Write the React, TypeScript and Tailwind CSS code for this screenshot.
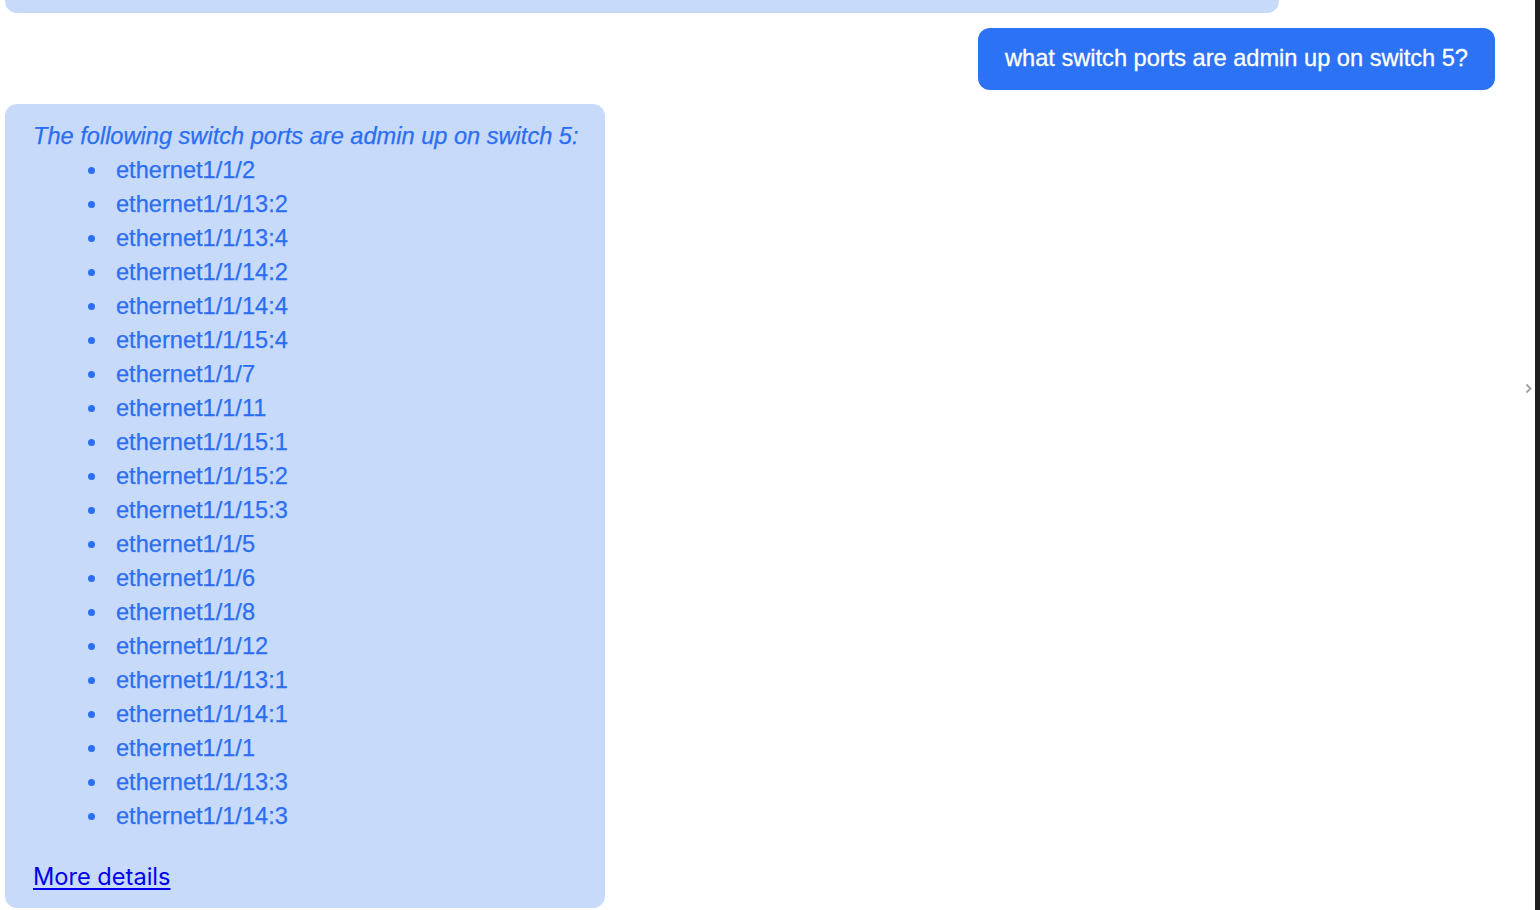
const ports = [
  'ethernet1/1/2',
  'ethernet1/1/13:2',
  'ethernet1/1/13:4',
  'ethernet1/1/14:2',
  'ethernet1/1/14:4',
  'ethernet1/1/15:4',
  'ethernet1/1/7',
  'ethernet1/1/11',
  'ethernet1/1/15:1',
  'ethernet1/1/15:2',
  'ethernet1/1/15:3',
  'ethernet1/1/5',
  'ethernet1/1/6',
  'ethernet1/1/8',
  'ethernet1/1/12',
  'ethernet1/1/13:1',
  'ethernet1/1/14:1',
  'ethernet1/1/1',
  'ethernet1/1/13:3',
  'ethernet1/1/14:3',
]

export default function App() {
  return (
    <div className="flex h-[910px] w-[1540px] overflow-hidden bg-white font-['Liberation_Sans',Arial,sans-serif]">
      <div className="relative flex-1">
        {/* tail of the previous answer, scrolled mostly out of view */}
        <div className="ml-[5px] h-[13px] w-[1274px] rounded-b-xl bg-[#c7dafa]" />

        {/* user question */}
        <div className="mt-[15px] flex justify-end pr-[40px]">
          <div className="flex h-[62px] items-center rounded-xl bg-[#2b73f4] px-[27px] text-[23.6px] text-white [-webkit-text-stroke:0.3px_white]">
            what switch ports are admin up on switch 5?
          </div>
        </div>

        {/* assistant answer */}
        <div className="ml-[5px] mt-[14px] w-[600px] rounded-xl bg-[#c7dafa] pb-[14px] pl-[28px] pr-4 pt-[15px] text-[23.6px] leading-[34px] text-[#2b6ef1] [-webkit-text-stroke:0.25px_#2b6ef1]">
          <p className="italic">The following switch ports are admin up on switch 5:</p>
          <ul className="pl-[55px]">
            {ports.map((p) => (
              <li key={p} className="flex items-center">
                <span className="mr-[21px] h-[7px] w-[7px] rounded-full bg-[#2b6ef1]" />
                {p}
              </li>
            ))}
          </ul>
          <a
            href="#"
            className="mt-[27px] inline-block font-['Inter',sans-serif] text-[#0000ee] underline underline-offset-[3px] [-webkit-text-stroke:0px]"
          >
            More details
          </a>
        </div>

        <svg
          className="absolute right-[3px] top-[383px]"
          width="7"
          height="11"
          viewBox="0 0 7 11"
          fill="none"
          stroke="#a0a0a0"
          strokeWidth="1.8"
        >
          <path d="M1.5 1.5 L5.5 5.5 L1.5 9.5" />
        </svg>
      </div>
      <div className="h-full w-[5px] bg-[#1e1e1e]" />
    </div>
  )
}
